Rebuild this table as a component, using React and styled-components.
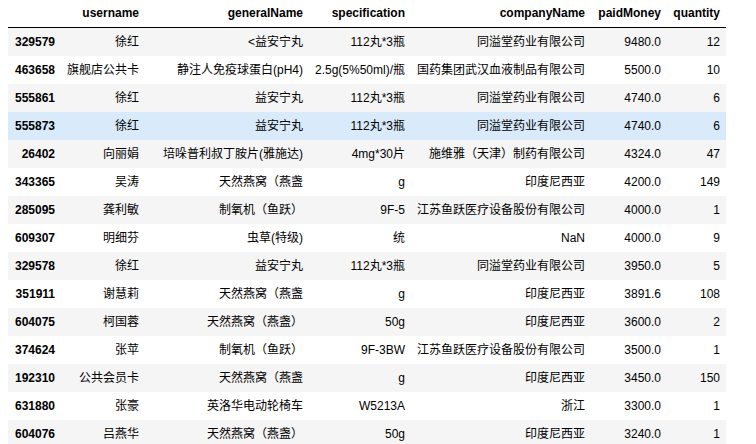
import React from 'react';
import styled, { createGlobalStyle } from 'styled-components';

const GlobalStyle = createGlobalStyle`
  html, body {
    margin: 0;
    padding: 0;
    background: #fff;
  }
  body {
    font-family: "Liberation Sans", Arial, "Noto Sans CJK SC", sans-serif;
    font-size: 12px;
    color: #000;
  }
`;

const columns = [
  { key: 'index', label: '', width: 53 },
  { key: 'username', label: 'username', width: 84 },
  { key: 'generalName', label: 'generalName', width: 164 },
  { key: 'specification', label: 'specification', width: 102 },
  { key: 'companyName', label: 'companyName', width: 180 },
  { key: 'paidMoney', label: 'paidMoney', width: 76 },
  { key: 'quantity', label: 'quantity', width: 59 },
];

const rows = [
  ['329579', '徐红', '<益安宁丸', '112丸*3瓶', '同溢堂药业有限公司', '9480.0', '12'],
  ['463658', '旗舰店公共卡', '静注人免疫球蛋白(pH4)', '2.5g(5%50ml)/瓶', '国药集团武汉血液制品有限公司', '5500.0', '10'],
  ['555861', '徐红', '益安宁丸', '112丸*3瓶', '同溢堂药业有限公司', '4740.0', '6'],
  ['555873', '徐红', '益安宁丸', '112丸*3瓶', '同溢堂药业有限公司', '4740.0', '6'],
  ['26402', '向丽娟', '培哚普利叔丁胺片(雅施达)', '4mg*30片', '施维雅（天津）制药有限公司', '4324.0', '47'],
  ['343365', '吴涛', '天然燕窝（燕盏', 'g', '印度尼西亚', '4200.0', '149'],
  ['285095', '龚利敏', '制氧机（鱼跃）', '9F-5', '江苏鱼跃医疗设备股份有限公司', '4000.0', '1'],
  ['609307', '明细芬', '虫草(特级)', '统', 'NaN', '4000.0', '9'],
  ['329578', '徐红', '益安宁丸', '112丸*3瓶', '同溢堂药业有限公司', '3950.0', '5'],
  ['351911', '谢慧莉', '天然燕窝（燕盏', 'g', '印度尼西亚', '3891.6', '108'],
  ['604075', '柯国蓉', '天然燕窝（燕盏）', '50g', '印度尼西亚', '3600.0', '2'],
  ['374624', '张苹', '制氧机（鱼跃）', '9F-3BW', '江苏鱼跃医疗设备股份有限公司', '3500.0', '1'],
  ['192310', '公共会员卡', '天然燕窝（燕盏', 'g', '印度尼西亚', '3450.0', '150'],
  ['631880', '张豪', '英洛华电动轮椅车', 'W5213A', '浙江', '3300.0', '1'],
  ['604076', '吕燕华', '天然燕窝（燕盏）', '50g', '印度尼西亚', '3240.0', '1'],
];

// row under the mouse pointer in the screenshot
const HOVERED = 3;

const App = () => {
  return (
    <>
      <GlobalStyle />
      <Frame>
        <DataFrame>
          <colgroup>
            {columns.map((c) => (
              <col key={c.key} style={{ width: c.width }} />
            ))}
          </colgroup>
          <thead>
            <tr>
              {columns.map((c) => (
                <HeadCell key={c.key}>{c.label}</HeadCell>
              ))}
            </tr>
          </thead>
          <tbody>
            {rows.map((r, i) => (
              <Row key={r[0] + i} $odd={i % 2 === 0} $hover={i === HOVERED}>
                <IndexCell>{r[0]}</IndexCell>
                {r.slice(1).map((v, j) => (
                  <Cell key={j}>{v}</Cell>
                ))}
              </Row>
            ))}
          </tbody>
        </DataFrame>
      </Frame>
    </>
  );
};

const Frame = styled.div`
  padding-left: 8px;
  height: 444px;
  overflow: hidden;
`;

const DataFrame = styled.table`
  border-collapse: separate;
  border-spacing: 0;
  table-layout: fixed;
  width: 717px;
  font-size: 12px;
  line-height: 14px;
`;

const HeadCell = styled.th`
  box-sizing: border-box;
  height: 28px;
  padding: 0 6px 1px;
  text-align: right;
  vertical-align: middle;
  font-weight: bold;
  white-space: nowrap;
  border-bottom: 1px solid #000;
`;

const Row = styled.tr`
  height: 28px;
  background: ${(p) => (p.$hover ? '#d9ebfb' : p.$odd ? '#f5f5f5' : '#fff')};
`;

const IndexCell = styled.th`
  padding: 0 6px;
  text-align: right;
  vertical-align: middle;
  font-weight: bold;
  white-space: nowrap;
`;

const Cell = styled.td`
  padding: 0 6px;
  text-align: right;
  vertical-align: middle;
  white-space: nowrap;
`;

export default App;
